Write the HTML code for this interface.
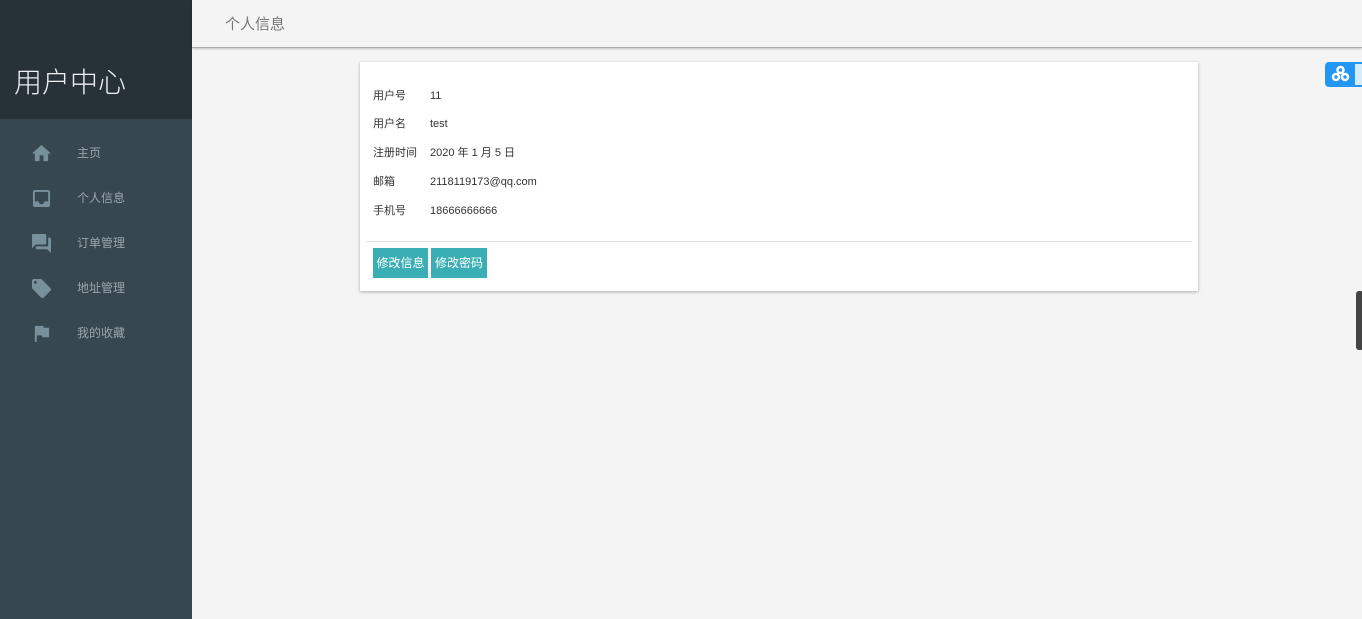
<!DOCTYPE html>
<html><head><meta charset="utf-8"><style>
*{margin:0;padding:0;box-sizing:border-box}
body{width:1362px;height:619px;background:#f4f4f4;font-family:"Liberation Sans","Noto Sans CJK SC",sans-serif;position:relative;overflow:hidden}
.side{position:absolute;left:0;top:0;width:192px;height:619px;background:#37474f}
.sh{height:119px;background:#263238;color:#eceff1;font-size:28px;padding:61px 0 0 14px;font-weight:300}
.nav{position:absolute;left:0;width:192px;height:20px;color:#9aa5ab;font-size:12px;line-height:16px}
.nav svg{position:absolute;left:32px;top:0px}
.nav span{position:absolute;left:77px;top:1px}
.top{position:absolute;left:192px;top:0;right:0;height:48px;background:#f4f4f4;border-bottom:1px solid #aaa;box-shadow:0 1px 2px rgba(0,0,0,.2)}
.top span{position:absolute;left:33px;top:13px;font-size:15px;color:#777}
.card{position:absolute;left:360px;top:62px;width:838px;height:229px;background:#fff;box-shadow:0 1px 3px rgba(0,0,0,.3)}
.row{position:absolute;left:13px;font-size:11px;color:#333;line-height:16px;height:16px}
.row b{font-weight:normal;position:absolute;left:57px;top:0;white-space:nowrap;line-height:16px}
.hr{position:absolute;left:6px;right:6px;top:179px;border-top:1px solid #e0e0e0}
.btn{position:absolute;top:186px;height:30px;background:#39aeb4;color:#fff;font-size:12px;line-height:30px;text-align:center}
</style></head><body>
<div class="side"><div class="sh">用户中心</div>
<div class="nav" style="top:144px"><svg width="19" height="19" viewBox="2 2 20 20"><path fill="#78909c" d="M10 20v-6h4v6h5v-8h3L12 3 2 12h3v8z"/></svg><span>主页</span></div>
<div class="nav" style="top:189px"><svg width="19" height="19" viewBox="2 2 20 20"><path fill="#78909c" d="M19 3H5c-1.1 0-2 .9-2 2v14c0 1.1.9 2 2 2h14c1.1 0 2-.9 2-2V5c0-1.1-.9-2-2-2zm0 12h-4c0 1.66-1.350 3-3 3s-3-1.34-3-3H5V5h14z"/></svg><span>个人信息</span></div>
<div class="nav" style="top:234px"><svg width="19" height="19" viewBox="2 2 20 20"><path fill="#78909c" d="M21 6h-2v9H6v2c0 .55.45 1 1 1h11l4 4V7c0-.55-.45-1-1-1zm-4 6V3c0-.55-.45-1-1-1H3c-.55 0-1 .45-1 1v14l4-4h10c.55 0 1-.45 1-1z"/></svg><span>订单管理</span></div>
<div class="nav" style="top:279px"><svg width="19" height="19" viewBox="2 2 20 20"><path fill="#78909c" d="M21.41 11.58l-9-9C12.050 2.22 11.550 2 11 2H4c-1.1 0-2 .9-2 2v7c0 .55.22 1.05.59 1.42l9 9c.36.36.86.58 1.41.58s1.05-.22 1.41-.59l7-7c.37-.36.59-.86.59-1.41s-.23-1.06-.59-1.42zM5.5 7C4.67 7 4 6.33 4 5.5S4.67 4 5.5 4 7 4.67 7 5.5 6.33 7 5.5 7z"/></svg><span>地址管理</span></div>
<div class="nav" style="top:324px"><svg width="19" height="19" viewBox="2 2 20 20"><path fill="#78909c" d="M14.4 6L14 4H5v17h2v-7h5.6l.4 2h7V6z"/></svg><span>我的收藏</span></div>
</div>
<div class="top"><span>个人信息</span></div>
<div class="card">
<div class="row" style="top:26px">用户号<b>11</b></div>
<div class="row" style="top:54px">用户名<b>test</b></div>
<div class="row" style="top:83px">注册时间<b>2020 年 1 月 5 日</b></div>
<div class="row" style="top:112px">邮箱<b>2118119173@qq.com</b></div>
<div class="row" style="top:141px">手机号<b>18666666666</b></div>
<div class="hr"></div>
<div class="btn" style="left:13px;width:55px">修改信息</div>
<div class="btn" style="left:71px;width:56px">修改密码</div>
</div>
<div style="position:absolute;left:1325px;top:62px;width:40px;height:25px;background:#2196f3;border-radius:4px"></div>
<div style="position:absolute;left:1355px;top:64px;width:7px;height:21px;background:#d6ecfb"></div>
<svg style="position:absolute;left:1330px;top:64px" width="21" height="20" viewBox="0 0 20 20"><g fill="none" stroke="#fff" stroke-width="2.5"><circle cx="10" cy="6" r="3"/><circle cx="5.5" cy="13" r="3"/><circle cx="14.5" cy="13" r="3"/></g></svg>
<div style="position:absolute;left:1356px;top:291px;width:8px;height:59px;background:#444;border-radius:3px"></div>
</body></html>
